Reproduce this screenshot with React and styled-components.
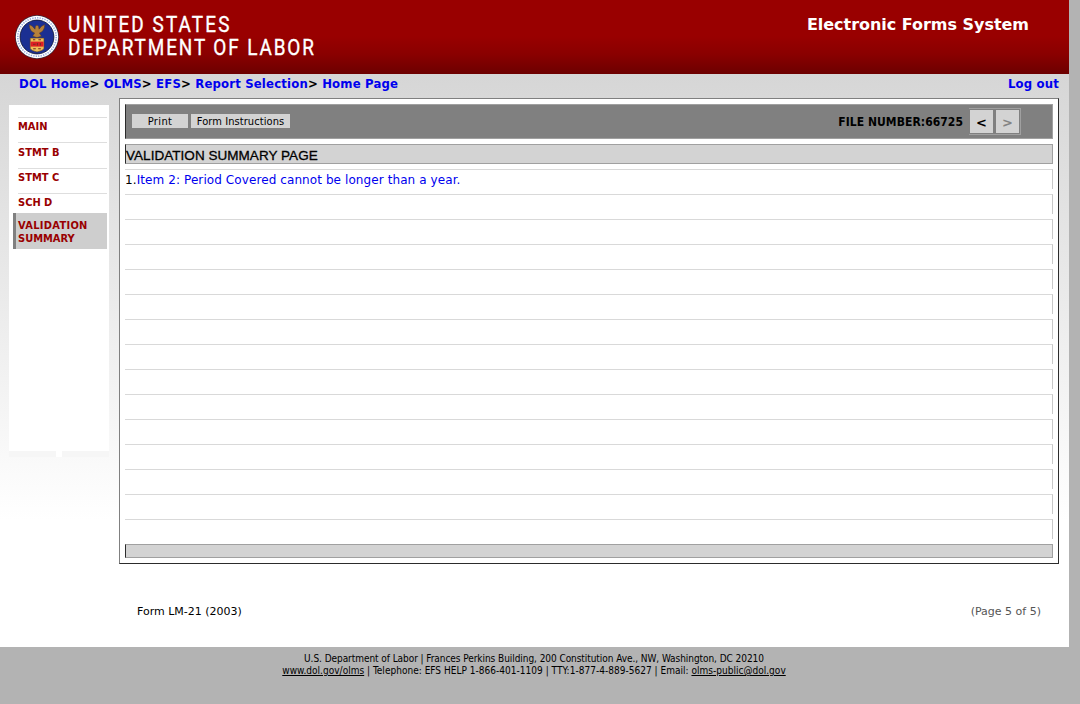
import React from "react";
import styled, { createGlobalStyle } from "styled-components";

const verdana = `Verdana, "DejaVu Sans", sans-serif`;
const tahoma = `Tahoma, "DejaVu Sans Condensed", "DejaVu Sans", sans-serif`;

const GlobalStyle = createGlobalStyle`
  * { box-sizing: border-box; }
  body { margin: 0; background: #b3b3b3; font-family: ${verdana}; color: #000; }
  a { color: #0000ee; text-decoration: none; }
`;

const Page = styled.div`
  width: 1069px;
  height: 647px;
  background: linear-gradient(#d6d6d6 74px, #ffffff 520px);
`;

const Header = styled.header`
  display: flex;
  justify-content: space-between;
  height: 74px;
  padding: 14px 40px 0 15px;
  background: linear-gradient(#990000 0, #990000 36px, #8a0000 54px, #6c0000 74px);
`;

const Brand = styled.div`
  display: flex;
  gap: 9px;
`;

const Seal = styled.svg`
  display: block;
  width: 44px;
  height: 46px;
`;

const BrandName = styled.div`
  width: 250px;
  margin-top: -1px;
  font-family: Roboto, sans-serif;
  font-size: 21.5px;
  line-height: 23px;
  color: #fff;
  white-space: nowrap;
  -webkit-text-stroke: 0.35px #fff;
  transform: scaleX(0.88);
  transform-origin: left top;
`;

const BrandLine = styled.div`
  letter-spacing: ${(p) => p.$spacing};
`;

const SystemTitle = styled.h1`
  margin: 0;
  font-size: 16px;
  line-height: 21px;
  letter-spacing: ${(p) => p.$spacing};
  color: #fff;
  white-space: nowrap;
`;

const TopBar = styled.nav`
  display: flex;
  justify-content: space-between;
  height: 24px;
  padding: 0 10px 0 19px;
  font-family: ${tahoma};
  font-size: 13px;
  font-weight: bold;
  line-height: 20px;
  letter-spacing: 0.17px;
  white-space: nowrap;
`;

const Crumbs = styled.div`
  flex: 1;
`;

const Main = styled.div`
  display: flex;
  align-items: flex-start;
  gap: 9px;
  padding-left: 9px;
`;

const SideColumn = styled.aside`
  width: 101px;
  padding-top: 7px;
`;

const SideMenu = styled.div`
  width: 100px;
  height: 346px;
  padding: 12px 2px 0 4px;
  background: #fff;
`;

const MenuItem = styled.div`
  height: ${(p) => p.$height}px;
  margin-left: 5px;
  padding-top: ${(p) => p.$top}px;
  border-top: 1px solid #dedede;
  font-family: ${tahoma};
  font-size: 11px;
  font-weight: bold;
  line-height: 13px;
  color: #990000;
`;

const ActiveItem = styled.div`
  height: 36px;
  padding: 6px 0 0 2px;
  border-left: 3px solid #808080;
  background: #cecece;
  font-family: ${tahoma};
  font-size: 11px;
  font-weight: bold;
  line-height: 13px;
  color: #990000;
  &::first-line { letter-spacing: 0.3px; }
`;

const SideFoot = styled.div`
  display: flex;
  justify-content: space-between;
  width: 100px;
  height: 6px;
  background: #fff;
`;

const FootBlock = styled.div`
  width: 47px;
  background: #f6f6f6;
`;

const Panel = styled.main`
  display: flex;
  flex-direction: column;
  gap: 5px;
  width: 940px;
  height: 466px;
  padding: 5px;
  border: 1px solid;
  border-color: #808080 #2c2c2c #2c2c2c #808080;
  background: #fff;
`;

const Bar = styled.div`
  display: flex;
  flex: none;
  height: ${(p) => p.$height}px;
  border: 1px solid #a0a0a0;
  border-left-color: #2c2c2c;
  background: ${(p) => p.$color};
`;

const Actions = styled.div`
  display: flex;
  gap: 3px;
  flex: 1;
  padding: 9px 0 0 6px;
`;

const ActionButton = styled.button`
  width: ${(p) => p.$width}px;
  height: 14px;
  padding: 1px 0 0;
  border: 0;
  background: #d3d3d3;
  font-family: ${tahoma};
  font-size: 11px;
  line-height: 13px;
  letter-spacing: ${(p) => p.$spacing || 0};
  color: #000;
  white-space: nowrap;
`;

const FileNumber = styled.div`
  padding-right: 6px;
  font-family: ${tahoma};
  font-size: 12px;
  font-weight: bold;
  line-height: 34px;
  letter-spacing: 0.06px;
  white-space: nowrap;
`;

const Pager = styled.div`
  display: flex;
  gap: 1px;
  width: 52px;
  height: 27px;
  margin: 3px 31px 0 0;
  border: 1px solid #a0a0a0;
  border-left: 0;
`;

const PagerButton = styled.button`
  width: 25px;
  height: 25px;
  padding: 3px 0 0;
  border: 1px solid #808080;
  background: #d3d3d3;
  font-family: ${verdana};
  font-size: 13px;
  font-weight: bold;
  line-height: 20px;
  color: ${(p) => (p.disabled ? "#838383" : "#000")};
`;

const PanelTitle = styled.h2`
  margin: 0;
  font-family: "Liberation Sans", Arial, sans-serif;
  font-size: 13.5px;
  font-weight: normal;
  line-height: 21px;
  letter-spacing: 0.04px;
  -webkit-text-stroke: 0.3px #000;
`;

const Row = styled.div`
  flex: none;
  height: 20px;
  border-top: 1px solid #d9d9d9;
  border-right: 1px solid #c8c8c8;
  font-size: 12px;
  line-height: 20px;
  letter-spacing: 0.09px;
`;

const FormInfo = styled.div`
  display: flex;
  justify-content: space-between;
  padding: 40px 28px 0 137px;
  font-size: 11px;
  line-height: 16px;
`;

const PageCount = styled.span`
  color: #555;
`;

const Footer = styled.footer`
  width: 1068px;
  padding-top: 6px;
  font-family: ${tahoma};
  font-size: 10px;
  line-height: 12px;
  text-align: center;
  white-space: nowrap;
  a { color: #000; text-decoration: underline; }
`;

const FootLine = styled.div`
  letter-spacing: ${(p) => p.$spacing || 0};
`;

const crumbs = ["DOL Home", "OLMS", "EFS", "Report Selection", "Home Page"];
const menu = [
  { label: "MAIN", height: 25, top: 2 },
  { label: "STMT B", height: 26, top: 3 },
  { label: "STMT C", height: 25, top: 2 },
  { label: "SCH D", height: 20, top: 2 },
];

function DolSeal() {
  return (
    <Seal viewBox="0 0 44 46">
      <circle cx="22" cy="23" r="22" fill="#3b2a3c" />
      <circle cx="22" cy="23" r="21.2" fill="#fff" />
      <circle cx="22" cy="23" r="19.2" fill="none" stroke="#93a8dd" strokeWidth="1.6" strokeDasharray="1.3 1.2" />
      <circle cx="22" cy="23" r="16.9" fill="#1b2f92" stroke="#10163c" strokeWidth="0.9" />
      <path d="M14.2 10.5Q14.5 17.5 19.6 19L17.6 22.2L22 23.6L26.4 22.2L24.4 19Q29.5 17.5 29.8 10.5Q26.4 11.6 24 15.2L23.6 12.2Q22 10.4 20.4 12.2L20 15.2Q17.6 11.6 14.2 10.5Z" fill="#b5803a" stroke="#4c3526" strokeWidth="0.5" />
      <path d="M15.2 24.1H29V34.5Q28.2 36.6 22 38Q16 36.6 15.2 34.5Z" fill="#edbd58" stroke="#574022" strokeWidth="0.6" />
      <path d="M15.6 27.6H28.6V32.6H15.6Z" fill="#df1d24" />
      <path d="M18 25.8H20.3M23.4 25.8H26M18.2 34.7H20.8M23.2 34.7H25.8M18 30.3H20.6M22.4 29V31.5M25.4 29V31.5" stroke="#7b2a22" strokeWidth="1.1" />
    </Seal>
  );
}

export default function App() {
  return (
    <>
      <GlobalStyle />
      <Page>
        <Header>
          <Brand>
            <DolSeal />
            <BrandName>
              <BrandLine $spacing="2.4px">UNITED STATES</BrandLine>
              <BrandLine $spacing="2.15px">DEPARTMENT OF LABOR</BrandLine>
            </BrandName>
          </Brand>
          <SystemTitle $spacing="-0.03px">Electronic Forms System</SystemTitle>
        </Header>
        <TopBar>
          <Crumbs>
            {crumbs.map((c, i) => (
              <React.Fragment key={c}>
                <a href="#">{c}</a>
                {i < crumbs.length - 1 && "> "}
              </React.Fragment>
            ))}
          </Crumbs>
          <a href="#">Log out</a>
        </TopBar>
        <Main>
          <SideColumn>
            <SideMenu>
              {menu.map((m) => (
                <MenuItem key={m.label} $height={m.height} $top={m.top}>{m.label}</MenuItem>
              ))}
              <ActiveItem>VALIDATION<br />SUMMARY</ActiveItem>
            </SideMenu>
            <SideFoot>
              <FootBlock />
              <FootBlock />
            </SideFoot>
          </SideColumn>
          <Panel>
            <Bar $height={35} $color="#808080">
              <Actions>
                <ActionButton $width={56} $spacing="0.35px">Print</ActionButton>
                <ActionButton $width={99} $spacing="0.08px">Form Instructions</ActionButton>
              </Actions>
              <FileNumber>FILE NUMBER:66725</FileNumber>
              <Pager>
                <PagerButton>&lt;</PagerButton>
                <PagerButton disabled>&gt;</PagerButton>
              </Pager>
            </Bar>
            <Bar $height={20} $color="#d3d3d3">
              <PanelTitle>VALIDATION SUMMARY PAGE</PanelTitle>
            </Bar>
            <Row>1.<a href="#">Item 2: Period Covered cannot be longer than a year.</a></Row>
            {Array.from({ length: 14 }, (_, i) => <Row key={i} />)}
            <Bar $height={14} $color="#d3d3d3" />
          </Panel>
        </Main>
        <FormInfo>
          <span>Form LM-21 (2003)</span>
          <PageCount>(Page 5 of 5)</PageCount>
        </FormInfo>
      </Page>
      <Footer>
        <FootLine $spacing="-0.06px">U.S. Department of Labor | Frances Perkins Building, 200 Constitution Ave., NW, Washington, DC 20210</FootLine>
        <FootLine $spacing="0.02px">
          <a href="#">www.dol.gov/olms</a> | Telephone: EFS HELP 1-866-401-1109 | TTY:1-877-4-889-5627 | Email: <a href="#">olms-public@dol.gov</a>
        </FootLine>
      </Footer>
    </>
  );
}
